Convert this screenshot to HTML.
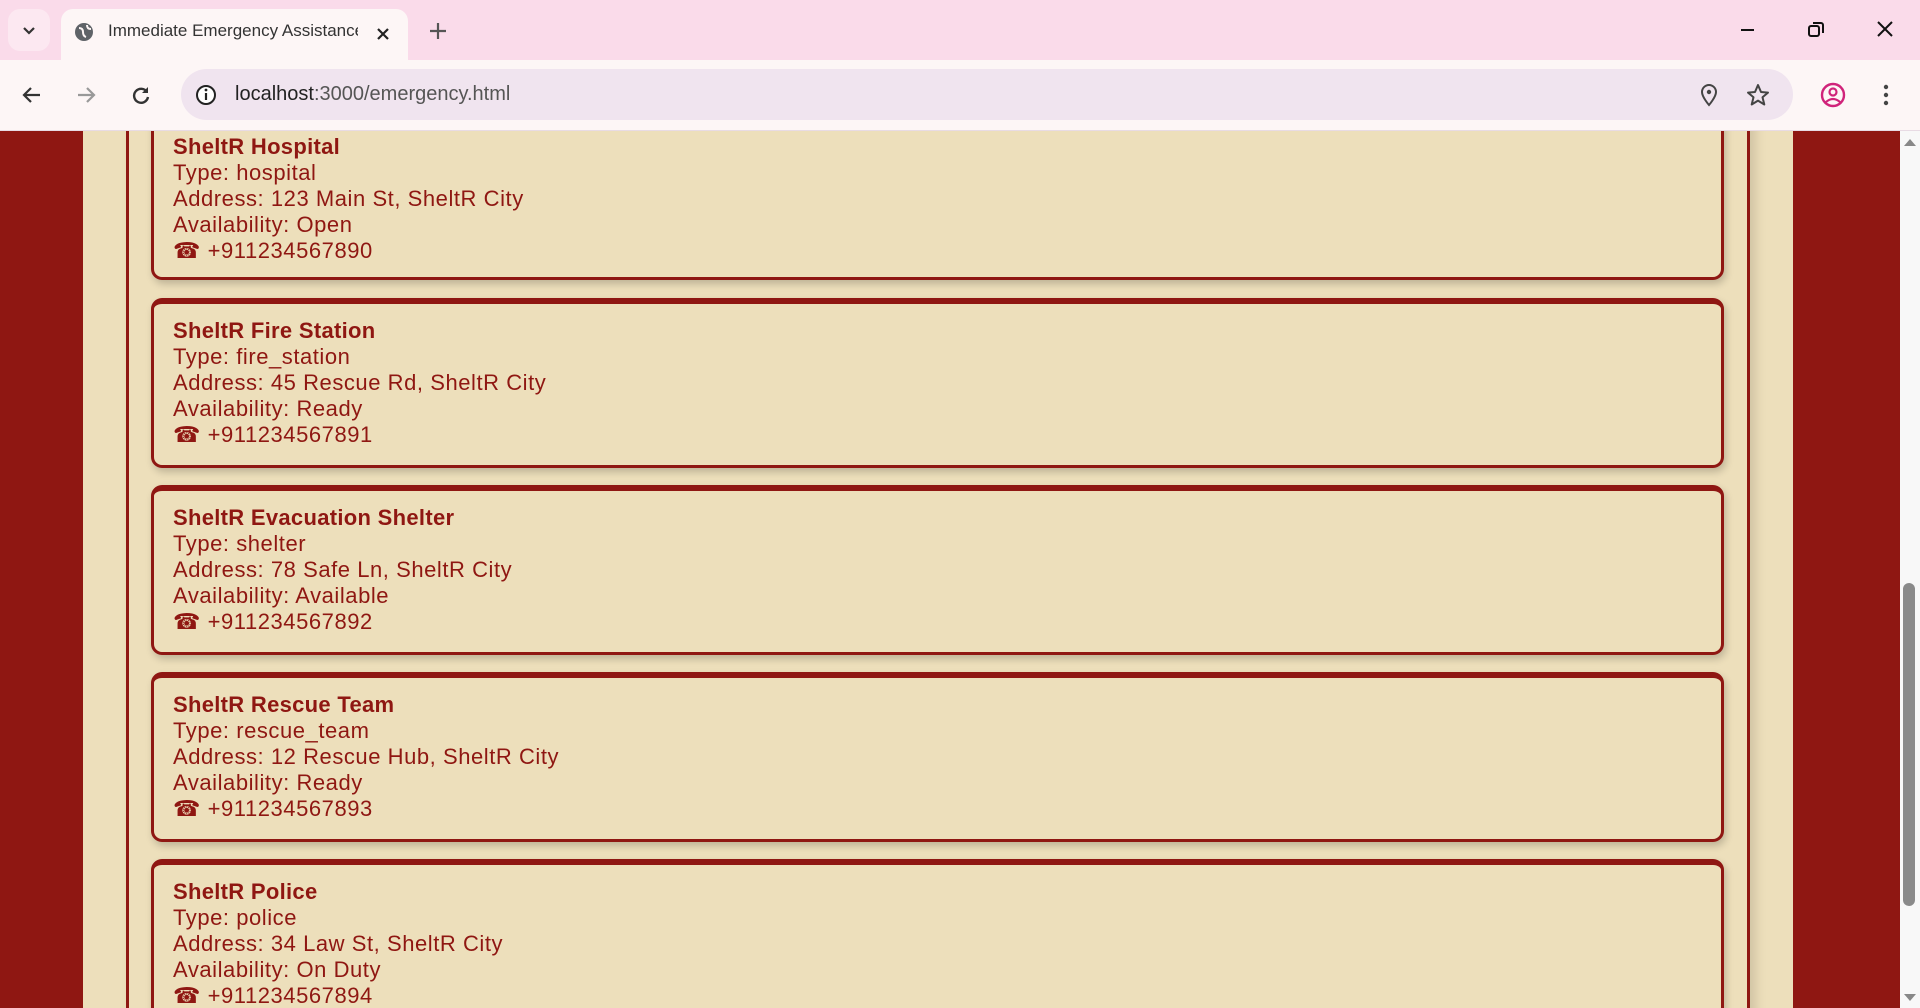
<!DOCTYPE html>
<html><head><meta charset="utf-8"><style>
*{margin:0;padding:0;box-sizing:border-box}
body{width:1920px;height:1008px;overflow:hidden;background:#fdf6f6;font-family:"Liberation Sans",sans-serif;position:relative}
.tabs{position:absolute;left:0;top:0;width:1920px;height:60px;background:#fadbea}
.tabdd{position:absolute;left:8px;top:9px;width:42px;height:42px;background:#fce8f1;border-radius:12px}
.tab{position:absolute;left:61px;top:9px;width:347px;height:51px;background:#fdf6f6;border-radius:12px 12px 0 0}
.tab .t{position:absolute;left:47px;top:12px;font-size:17px;color:#333;white-space:nowrap;width:250px;overflow:hidden}
.toolbar{position:absolute;left:0;top:60px;width:1920px;height:71px;background:#fdf6f6;border-bottom:1px solid #e8dbe4}
.omni{position:absolute;left:181px;top:9px;width:1612px;height:51px;background:#f0e4ef;border-radius:26px}
.omni .u{position:absolute;left:54px;top:14px;font-size:20px;color:#222}
.content{position:absolute;left:0;top:131px;width:1900px;height:877px;background:#8f1712;overflow:hidden}
.page{position:absolute;left:83px;top:0;width:1710px;height:877px;background:#eddfbb}
.box{position:absolute;left:43px;top:-20px;width:1624px;height:1000px;border-left:3px solid #8f1712;border-right:3px solid #8f1712;box-shadow:6px 0 10px rgba(0,0,0,.12)}
.card{position:absolute;left:68px;width:1573px;height:170px;border:3px solid #8f1712;border-top-width:6px;border-radius:11px;background:#eddfbb;box-shadow:2px 4px 8px rgba(0,0,0,.2);padding:14px 0 0 19px;color:#8f1712;font-size:22px;line-height:26px;letter-spacing:.55px;white-space:nowrap}
.card b{display:block;letter-spacing:.3px}
.sb{position:absolute;left:1900px;top:131px;width:20px;height:877px;background:#f8f8f8}
.thumb{position:absolute;left:1903px;top:583px;width:12px;height:323px;background:#8a8a8a;border-radius:6px}
</style></head><body>
<div class="tabs">
<div class="tabdd"><svg width="42" height="42"><path d="M16 19l5 5 5-5" stroke="#333" stroke-width="2.2" fill="none"/></svg></div>
<div class="tab"><svg style="position:absolute;left:11px;top:11px" width="24" height="24"><circle cx="12" cy="12" r="9" fill="#5f6368"/><path d="M7 8q4 0 4 4t3 5M15 5q0 4 4 4" stroke="#fdf6f6" stroke-width="2" fill="none"/></svg><div class="t">Immediate Emergency Assistance</div><svg style="position:absolute;left:310px;top:13px" width="24" height="24"><path d="M7 7l10 10M17 7L7 17" stroke="#222" stroke-width="2.2"/></svg></div>
<svg style="position:absolute;left:426px;top:19px" width="24" height="24"><path d="M12 4v16M4 12h16" stroke="#555" stroke-width="2.2"/></svg>
<svg style="position:absolute;left:1735px;top:18px" width="24" height="24"><path d="M6 12h13" stroke="#111" stroke-width="2"/></svg>
<svg style="position:absolute;left:1804px;top:18px" width="24" height="24"><rect x="5" y="8" width="10" height="10" rx="2" stroke="#111" stroke-width="2" fill="none"/><path d="M9 5h8a2 2 0 0 1 2 2v8" stroke="#111" stroke-width="2" fill="none"/></svg>
<svg style="position:absolute;left:1873px;top:17px" width="24" height="24"><path d="M5 5l14 14M19 5L5 19" stroke="#111" stroke-width="2"/></svg>
</div>
<div class="toolbar">
<svg style="position:absolute;left:20px;top:23px" width="24" height="24"><path d="M20 12H5M11 5l-7 7 7 7" stroke="#333" stroke-width="2.2" fill="none"/></svg>
<svg style="position:absolute;left:74px;top:23px" width="24" height="24"><path d="M4 12h15M13 5l7 7-7 7" stroke="#999" stroke-width="2.2" fill="none"/></svg>
<svg style="position:absolute;left:129px;top:23px" width="24" height="24"><path d="M18 9A7 7 0 1 0 19 14" stroke="#333" stroke-width="2.4" fill="none"/><path d="M19 4v6h-6z" fill="#333"/></svg>
<div class="omni"><svg style="position:absolute;left:12px;top:13px" width="26" height="26"><circle cx="13" cy="13" r="9" stroke="#222" stroke-width="2" fill="#fff"/><path d="M13 11v7" stroke="#222" stroke-width="2.2"/><circle cx="13" cy="8" r="1.4" fill="#222"/></svg><div class="u">localhost<span style="color:#555">:3000/emergency.html</span></div>
<svg style="position:absolute;left:1516px;top:13px" width="24" height="26"><path d="M12 23s-7-8-7-13a7 7 0 0 1 14 0c0 5-7 13-7 13z" stroke="#444" stroke-width="2" fill="none"/><circle cx="12" cy="10" r="2.2" fill="#444"/></svg>
<svg style="position:absolute;left:1564px;top:13px" width="26" height="26"><path d="M13 3l3 7 7 .6-5.5 4.7 1.8 7.2L13 18.6 6.7 22.5l1.8-7.2L3 10.6l7-.6z" stroke="#444" stroke-width="2" fill="none" stroke-linejoin="round"/></svg>
</div>
<svg style="position:absolute;left:1819px;top:21px" width="28" height="28"><circle cx="14" cy="14" r="11" stroke="#d0237a" stroke-width="2.4" fill="none"/><circle cx="14" cy="11" r="3.5" stroke="#d0237a" stroke-width="2.2" fill="none"/><path d="M7 21q7-6 14 0" stroke="#d0237a" stroke-width="2.2" fill="none"/></svg>
<svg style="position:absolute;left:1876px;top:21px" width="20" height="28"><circle cx="10" cy="6" r="2.2" fill="#444"/><circle cx="10" cy="14" r="2.2" fill="#444"/><circle cx="10" cy="22" r="2.2" fill="#444"/></svg>
</div>
<div class="content"><div class="page"><div class="box"></div>
<div class="card" style="top:-43px;height:192px"><b>&nbsp;</b><b>SheltR Hospital</b>Type: hospital<br>Address: 123 Main St, SheltR City<br>Availability: Open<br>☎ +911234567890</div>
<div class="card" style="top:167px"><b>SheltR Fire Station</b>Type: fire_station<br>Address: 45 Rescue Rd, SheltR City<br>Availability: Ready<br>☎ +911234567891</div>
<div class="card" style="top:354px"><b>SheltR Evacuation Shelter</b>Type: shelter<br>Address: 78 Safe Ln, SheltR City<br>Availability: Available<br>☎ +911234567892</div>
<div class="card" style="top:541px"><b>SheltR Rescue Team</b>Type: rescue_team<br>Address: 12 Rescue Hub, SheltR City<br>Availability: Ready<br>☎ +911234567893</div>
<div class="card" style="top:728px"><b>SheltR Police</b>Type: police<br>Address: 34 Law St, SheltR City<br>Availability: On Duty<br>☎ +911234567894</div>
</div></div>
<div class="sb"></div><div class="thumb"></div>
<svg style="position:absolute;left:1902px;top:136px" width="16" height="12"><path d="M2 10l6-7 6 7z" fill="#888"/></svg>
<svg style="position:absolute;left:1902px;top:992px" width="16" height="12"><path d="M2 2l6 7 6-7z" fill="#888"/></svg>
</body></html>
